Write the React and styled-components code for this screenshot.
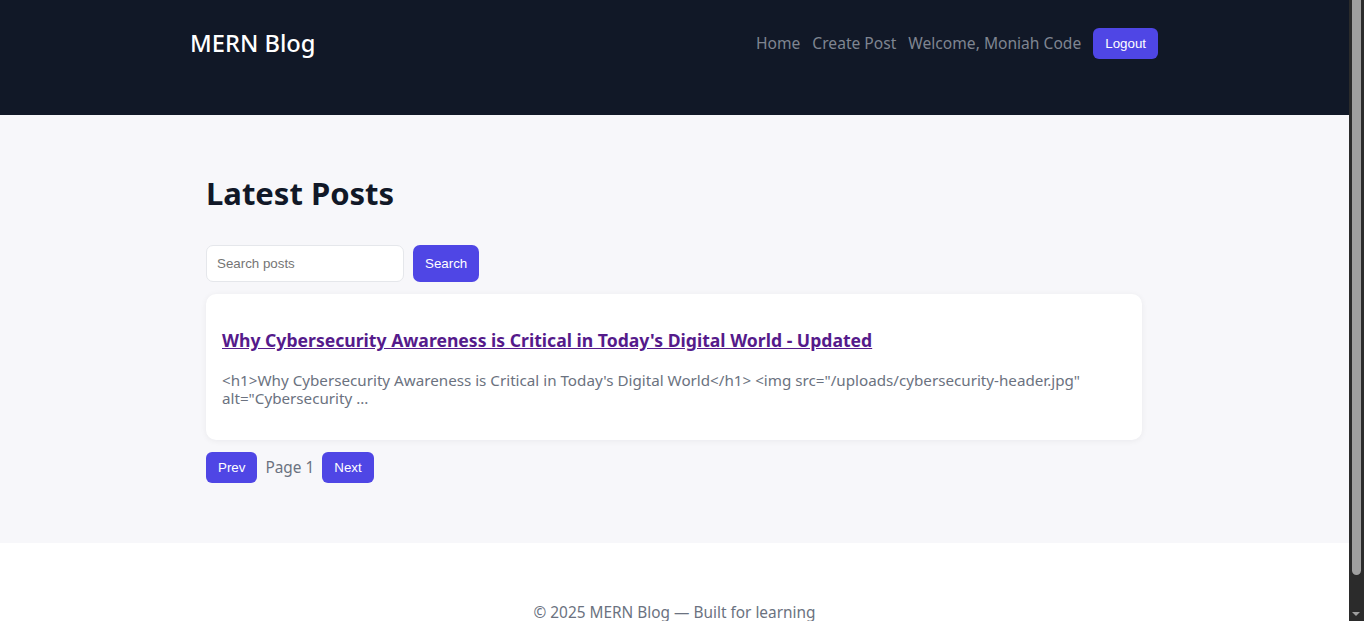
import { useState } from 'react';
import styled, { createGlobalStyle } from 'styled-components';

const GlobalStyle = createGlobalStyle`
    html, body {
        margin: 0;
        padding: 0;
        background: #ffffff;
        scrollbar-width: none;
    }

    ::-webkit-scrollbar {
        display: none;
    }

    body {
        font-family: "Noto Sans", "Open Sans", sans-serif;
        color: #111827;
    }

    #root {
        margin-right: 15px;
    }
`;

// the page in the shot carries a dark scrollbar at its right edge
const ScrollTrack = styled.div`
    position: fixed;
    top: 0;
    right: 0;
    width: 15px;
    height: 100vh;
    background: #2b2b2b;
`;

const ScrollThumb = styled.div`
    position: absolute;
    top: 0;
    left: 3px;
    width: 9px;
    height: 575px;
    background: #9f9f9f;
    border-radius: 0 0 5px 5px;
`;

const ScrollArrow = styled.div`
    position: absolute;
    bottom: 5px;
    left: 3px;
    width: 0;
    height: 0;
    border-left: 4.5px solid transparent;
    border-right: 4.5px solid transparent;
    border-top: 4px solid #9f9f9f;
`;

const Header = styled.header`
    background: #111827;
    height: 115px;
    box-sizing: border-box;
    padding-top: 28px;
`;

const Container = styled.div`
    max-width: 1000px;
    margin: 0 auto;
    padding: 0 16px;
    box-sizing: border-box;
    position: relative;
    left: -0.5px;
`;

const NavBar = styled(Container)`
    display: flex;
    align-items: center;
    justify-content: space-between;
    height: 31px;
`;

const Brand = styled.a`
    color: #ffffff;
    font-size: 23.7px;
    font-weight: 500;
    line-height: 28px;
    margin-top: -2px;
    text-decoration: none;
`;

const NavLinks = styled.nav`
    display: flex;
    align-items: center;
    gap: 12px;
`;

const NavLink = styled.a`
    color: #7f8591;
    font-size: 15.6px;
    line-height: 18px;
    margin-top: -2px;
    text-decoration: none;
`;

const Button = styled.button`
    background: #4f46e5;
    color: #ffffff;
    border: none;
    border-radius: 6px;
    font-family: "Liberation Sans", Arial, sans-serif;
    font-size: 13.33px;
    height: 31px;
    padding: 0 12px;
    cursor: pointer;
`;

const Main = styled.main`
    background: #f7f7fa;
    padding: 59px 0 60px;
`;

const Content = styled(Container)`
    padding: 0 32px;
`;

const Title = styled.h1`
    font-size: 31px;
    font-weight: 700;
    line-height: 38px;
    margin: 0 0 33px;
    color: #111827;
`;

const SearchRow = styled.form`
    display: flex;
    gap: 9px;
    margin-bottom: 12px;
`;

const SearchInput = styled.input`
    width: 198px;
    height: 37px;
    box-sizing: border-box;
    border: 1px solid #e5e7eb;
    border-radius: 7px;
    padding: 0 10px;
    font-family: "Liberation Sans", Arial, sans-serif;
    font-size: 13.33px;
    background: #ffffff;
    outline: none;

    &::placeholder {
        color: #757575;
    }
`;

const SearchButton = styled(Button)`
    height: 37px;
    border-radius: 7px;
`;

const Card = styled.article`
    background: #ffffff;
    border-radius: 10px;
    box-shadow: 0 1px 6px rgba(17, 24, 39, 0.06);
    padding: 16px;
    margin-bottom: 12px;
`;

const PostTitle = styled.h3`
    margin: 19px 0 20px;
    font-size: 17.6px;
    font-weight: 700;
    line-height: 22px;

    a {
        color: #551a8b;
    }
`;

const Excerpt = styled.p`
    margin: 0 0 17px;
    color: #6b7280;
    font-size: 15.2px;
    line-height: 18px;
`;

const Pager = styled.div`
    display: flex;
    align-items: center;
    gap: 8px;
`;

const PageLabel = styled.span`
    color: #6b7280;
    font-size: 15.4px;
    margin-top: -1px;
`;

const Footer = styled.footer`
    padding: 61px 0 59px;
    text-align: center;
    color: #6b7280;
    font-size: 15.4px;
    line-height: 18px;
`;

const posts = [
    {
        id: 1,
        title: "Why Cybersecurity Awareness is Critical in Today's Digital World - Updated",
        excerpt: '<h1>Why Cybersecurity Awareness is Critical in Today\'s Digital World</h1> <img src="/uploads/cybersecurity-header.jpg" alt="Cybersecurity ...',
    },
];

const App = () => {
    const [query, setQuery] = useState('');
    const [page] = useState(1);

    return (
        <>
            <GlobalStyle />
            <Header>
                <NavBar>
                    <Brand href="#">MERN Blog</Brand>
                    <NavLinks>
                        <NavLink href="#">Home</NavLink>
                        <NavLink href="#">Create Post</NavLink>
                        <NavLink as="span">Welcome, Moniah Code</NavLink>
                        <Button>Logout</Button>
                    </NavLinks>
                </NavBar>
            </Header>
            <Main>
                <Content>
                    <Title>Latest Posts</Title>
                    <SearchRow onSubmit={(e) => e.preventDefault()}>
                        <SearchInput placeholder="Search posts" value={query}
                            onChange={(e) => setQuery(e.target.value)} />
                        <SearchButton>Search</SearchButton>
                    </SearchRow>
                    {posts.map((post) => (
                        <Card key={post.id}>
                            <PostTitle><a href="#">{post.title}</a></PostTitle>
                            <Excerpt>{post.excerpt}</Excerpt>
                        </Card>
                    ))}
                    <Pager>
                        <Button>Prev</Button>
                        <PageLabel>Page {page}</PageLabel>
                        <Button>Next</Button>
                    </Pager>
                </Content>
            </Main>
            <Footer>© 2025 MERN Blog — Built for learning</Footer>
            <ScrollTrack>
                <ScrollThumb />
                <ScrollArrow />
            </ScrollTrack>
        </>
    );
};

export default App;
